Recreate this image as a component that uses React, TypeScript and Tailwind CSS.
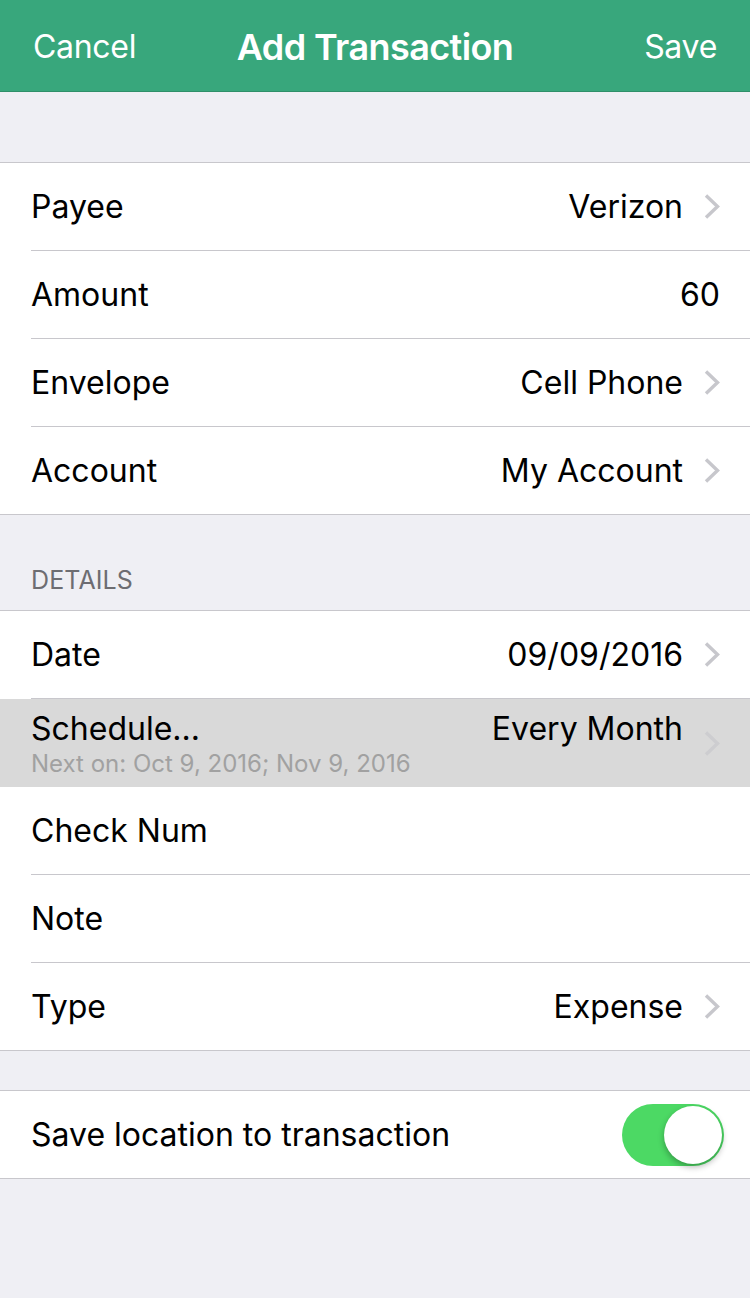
import React from 'react';

const font = { fontFamily: 'Inter, "Noto Sans", "Liberation Sans", sans-serif' };

function Chevron({ light = false }: { light?: boolean }) {
  return (
    <svg width="18" height="27" viewBox="0 0 18 27" className="shrink-0">
      <path d="M3 2.5 L14.5 13.5 L3 24.5" fill="none" stroke={light ? '#cdcdd0' : '#c7c7cc'} strokeWidth="3.4" strokeLinecap="butt" strokeLinejoin="miter" />
    </svg>
  );
}

function Row({ label, value, chevron = true, last = false }: { label: string; value?: string; chevron?: boolean; last?: boolean }) {
  return (
    <div className="pl-[31px] bg-white">
      <div className={(last ? 'h-[87px]' : 'h-[88px] border-b border-[#c8c7cc]') + ' flex items-center ' + (chevron ? 'pr-[29px]' : 'pr-[30px]')}>
        <span className="flex-1 text-[32px] text-black">{label}</span>
        {value && <span className="text-[32px] text-black">{value}</span>}
        {chevron ? <span className="ml-[20px] flex"><Chevron /></span> : null}
      </div>
    </div>
  );
}

export default function App() {
  return (
    <div className="w-[750px] h-[1298px] bg-[#efeff4] overflow-hidden" style={font}>
      <header className="h-[92px] bg-[#38a77c] border-b border-[#2f8f69] flex items-center px-[33px] pt-[3px] text-white">
        <span className="flex-1 text-[32px] tracking-[-0.3px]">Cancel</span>
        <span className="text-[36px] font-semibold tracking-[-0.6px]">Add Transaction</span>
        <span className="flex-1 text-right text-[32px] tracking-[-0.3px]">Save</span>
      </header>

      <div className="h-[70px]" />

      <section className="border-y border-[#c8c7cc] bg-white">
        <Row label="Payee" value="Verizon" />
        <Row label="Amount" value="60" chevron={false} />
        <Row label="Envelope" value="Cell Phone" />
        <Row label="Account" value="My Account" last />
      </section>

      <div className="h-[95px] flex items-end pl-[31px] pb-[11px]">
        <span className="text-[25px] text-[#6d6d72] tracking-[0.1px]">DETAILS</span>
      </div>

      <section className="border-y border-[#c8c7cc] bg-white">
        <Row label="Date" value="09/09/2016" />
        <div className="bg-[#d9d9d9] h-[88px] pl-[31px] pr-[29px] flex items-center">
          <div className="flex-1 flex flex-col pt-[4px]">
            <div className="flex items-center">
              <span className="flex-1 text-[32px] text-black leading-[38px]">Schedule...</span>
              <span className="text-[32px] text-black leading-[38px]">Every Month</span>
            </div>
            <span className="text-[24px] text-[#a1a1a1] leading-[32px]">Next on: Oct 9, 2016; Nov 9, 2016</span>
          </div>
          <span className="ml-[20px] flex"><Chevron light /></span>
        </div>
        <Row label="Check Num" chevron={false} />
        <Row label="Note" chevron={false} />
        <Row label="Type" value="Expense" last />
      </section>

      <div className="h-[39px]" />

      <section className="border-y border-[#c8c7cc] bg-white">
        <div className="h-[87px] pl-[31px] pr-[26px] flex items-center">
          <span className="flex-1 text-[32px] text-black">Save location to transaction</span>
          <div className="w-[102px] h-[62px] rounded-full bg-[#4cd964] relative">
            <div className="absolute right-[2px] top-[2px] w-[58px] h-[58px] rounded-full bg-white shadow-[0_3px_6px_rgba(0,0,0,0.3)]" />
          </div>
        </div>
      </section>
    </div>
  );
}
